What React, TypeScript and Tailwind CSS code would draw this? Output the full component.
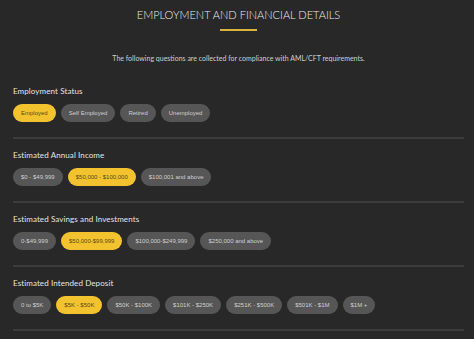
import React, { useState } from 'react';

const sections = [
  {
    label: 'Employment Status',
    options: ['Employed', 'Self Employed', 'Retired', 'Unemployed'],
    selected: 0,
  },
  {
    label: 'Estimated Annual Income',
    options: ['$0 - $49,999', '$50,000 - $100,000', '$100,001 and above'],
    selected: 1,
  },
  {
    label: 'Estimated Savings and Investments',
    options: ['0-$49,999', '$50,000-$99,999', '$100,000-$249,999', '$250,000 and above'],
    selected: 1,
  },
  {
    label: 'Estimated Intended Deposit',
    options: ['0 to $5K', '$5K - $50K', '$50K - $100K', '$101K - $250K', '$251K - $500K', '$501K - $1M', '$1M +'],
    selected: 1,
  },
];

const Section: React.FC<{ label: string; options: string[]; initial: number }> = ({ label, options, initial }) => {
  const [selected, setSelected] = useState(initial);
  return (
    <div className="pt-[11px] border-b-2 border-[#3c3c3c] pb-[15px]">
      <div className="text-[8px] leading-[10px] tracking-[0.1px] text-[#e4e4e4] mb-[8px]">{label}</div>
      <div className="flex gap-[5px]">
        {options.map((opt, i) => (
          <button
            key={opt}
            onClick={() => setSelected(i)}
            className={`h-[18px] px-[8px] rounded-full text-[6px] font-['Liberation_Sans',sans-serif] whitespace-nowrap ${
              i === selected ? 'bg-[#f2c32f] text-[#5b4a17]' : 'bg-[#565656] text-[#cfcfcf]'
            }`}
          >
            {opt}
          </button>
        ))}
      </div>
    </div>
  );
};

export default function App() {
  return (
    <div className="w-[474px] h-[339px] overflow-hidden bg-[#282828] font-['Lato',sans-serif]">
      <div className="pl-[13px] pr-[10px]">
        <div className="flex flex-col items-center pt-[9px]">
          <h1 className="text-[11px] leading-[12px] font-light text-[#ececec]">
            EMPLOYMENT AND FINANCIAL DETAILS
          </h1>
          <div className="w-[37px] h-[2px] bg-[#d9b43a] mt-[8px]" />
          <p className="text-[7px] leading-[9px] text-[#cfcfcf] mt-[23px]">
            The following questions are collected for compliance with AML/CFT requirements.
          </p>
        </div>
        <div className="mt-[12px]">
          {sections.map((s) => (
            <Section key={s.label} label={s.label} options={s.options} initial={s.selected} />
          ))}
        </div>
      </div>
    </div>
  );
}
